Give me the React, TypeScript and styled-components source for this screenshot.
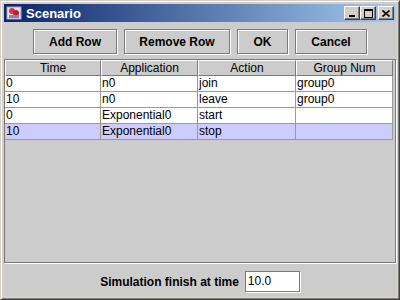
import React from "react";
import styled, { createGlobalStyle } from "styled-components";

const GlobalStyle = createGlobalStyle`
  html, body {
    margin: 0;
    padding: 0;
    background: #d4d0c8;
  }
`;

const Frame = styled.div`
  width: 400px;
  height: 300px;
  box-sizing: border-box;
  background: #d4d0c8;
  border-top: 1px solid #d4d0c8;
  border-left: 1px solid #d4d0c8;
  border-right: 1px solid #404040;
  border-bottom: 1px solid #404040;
  box-shadow: inset 1px 1px 0 #ffffff, inset -1px -1px 0 #808080;
  padding: 3px;
  display: flex;
  flex-direction: column;
  font-family: "Liberation Sans", Arial, sans-serif;
  font-size: 12px;
`;

const TitleBar = styled.div`
  height: 18px;
  display: flex;
  align-items: center;
  padding: 0 2px;
  background: linear-gradient(to right, #0a246a, #a6caf0);
  color: #ffffff;
  font-weight: bold;
  font-size: 13px;
`;

const TitleText = styled.span`
  margin-left: 4px;
  flex: 1;
`;

const WinButtons = styled.div`
  display: flex;
`;

const WinButton = styled.div<{ $gap?: boolean }>`
  width: 16px;
  height: 14px;
  box-sizing: border-box;
  background: #d4d0c8;
  border-top: 1px solid #ffffff;
  border-left: 1px solid #ffffff;
  border-right: 1px solid #404040;
  border-bottom: 1px solid #404040;
  box-shadow: inset -1px -1px 0 #808080;
  margin-left: ${(p) => (p.$gap ? "2px" : "0")};
  display: flex;
  align-items: center;
  justify-content: center;
`;

const Content = styled.div`
  flex: 1;
  background: #cccccc;
  display: flex;
  flex-direction: column;
`;

const ButtonRow = styled.div`
  display: flex;
  justify-content: center;
  gap: 7px;
  padding: 7px 0 5px 0;
`;

const Button = styled.div<{ $w: number }>`
  width: ${(p) => p.$w}px;
  height: 25px;
  box-sizing: border-box;
  border: 1px solid #7a7a7a;
  box-shadow: 1px 1px 0 #ffffff, inset 1px 1px 0 #ffffff;
  background: #cccccc;
  display: flex;
  align-items: center;
  justify-content: center;
  font-weight: bold;
  font-size: 12px;
  color: #000;
`;

const ScrollPane = styled.div`
  flex: 1;
  border: 1px solid #7a7a7a;
  box-shadow: 1px 1px 0 #ffffff;
  background: #cccccc;
  display: flex;
  flex-direction: column;
`;

const Grid = styled.div`
  display: grid;
  grid-template-columns: 96px 97px 98px 97px;
`;

const HeaderCell = styled.div`
  height: 16px;
  box-sizing: border-box;
  background: #cccccc;
  border-top: 1px solid #ffffff;
  border-left: 1px solid #ffffff;
  border-right: 1px solid #7a7a7a;
  border-bottom: 1px solid #7a7a7a;
  text-align: center;
  line-height: 14px;
  font-size: 12px;
  color: #000;
`;

const Cell = styled.div<{ $sel?: boolean }>`
  height: 16px;
  box-sizing: border-box;
  background: ${(p) => (p.$sel ? "#ccccff" : "#ffffff")};
  border-right: 1px solid #999999;
  border-bottom: 1px solid #999999;
  padding-left: 1px;
  line-height: 15px;
  font-size: 12px;
  color: #000;
  white-space: nowrap;
  overflow: hidden;
`;

const Footer = styled.div`
  height: 29px;
  display: flex;
  align-items: center;
  justify-content: center;
  gap: 6px;
  padding-top: 4px;
`;

const Label = styled.span`
  font-weight: bold;
  font-size: 12px;
  color: #000;
`;

const Field = styled.div`
  width: 55px;
  height: 21px;
  box-sizing: border-box;
  background: #ffffff;
  border: 1px solid #7a7a7a;
  box-shadow: 1px 1px 0 #ffffff;
  padding-left: 2px;
  line-height: 19px;
  font-size: 12px;
`;

const rows = [
  ["0", "n0", "join", "group0"],
  ["10", "n0", "leave", "group0"],
  ["0", "Exponential0", "start", ""],
  ["10", "Exponential0", "stop", ""],
];

const AppIcon = () => (
  <svg width="16" height="16" viewBox="0 0 16 16">
    <rect x="1" y="2" width="14" height="12" fill="#e8e0f0" stroke="#b0a0c0" />
    <circle cx="6" cy="6" r="3" fill="#e03040" />
    <circle cx="10" cy="8" r="3" fill="#c02030" />
    <rect x="3" y="10" width="10" height="3" fill="#9080b0" />
  </svg>
);

export default function App() {
  return (
    <>
      <GlobalStyle />
      <Frame>
        <TitleBar>
          <AppIcon />
          <TitleText>Scenario</TitleText>
          <WinButtons>
            <WinButton>
              <svg width="8" height="8" viewBox="0 0 8 8">
                <rect x="1" y="6" width="6" height="2" fill="#000" />
              </svg>
            </WinButton>
            <WinButton>
              <svg width="9" height="9" viewBox="0 0 9 9">
                <rect x="0.5" y="0.5" width="8" height="8" fill="none" stroke="#000" />
                <rect x="0" y="0" width="9" height="2" fill="#000" />
              </svg>
            </WinButton>
            <WinButton $gap>
              <svg width="8" height="7" viewBox="0 0 8 7">
                <path d="M0.5 0.5 L7.5 6.5 M7.5 0.5 L0.5 6.5" stroke="#000" strokeWidth="1.6" />
              </svg>
            </WinButton>
          </WinButtons>
        </TitleBar>
        <Content>
          <ButtonRow>
            <Button $w={84}>Add Row</Button>
            <Button $w={106}>Remove Row</Button>
            <Button $w={51}>OK</Button>
            <Button $w={72}>Cancel</Button>
          </ButtonRow>
          <ScrollPane>
            <Grid>
              <HeaderCell>Time</HeaderCell>
              <HeaderCell>Application</HeaderCell>
              <HeaderCell>Action</HeaderCell>
              <HeaderCell>Group Num</HeaderCell>
              {rows.map((r, i) =>
                r.map((c, j) => (
                  <Cell key={`${i}-${j}`} $sel={i === 3}>
                    {c}
                  </Cell>
                ))
              )}
            </Grid>
          </ScrollPane>
          <Footer>
            <Label>Simulation finish at time</Label>
            <Field>10.0</Field>
          </Footer>
        </Content>
      </Frame>
    </>
  );
}
